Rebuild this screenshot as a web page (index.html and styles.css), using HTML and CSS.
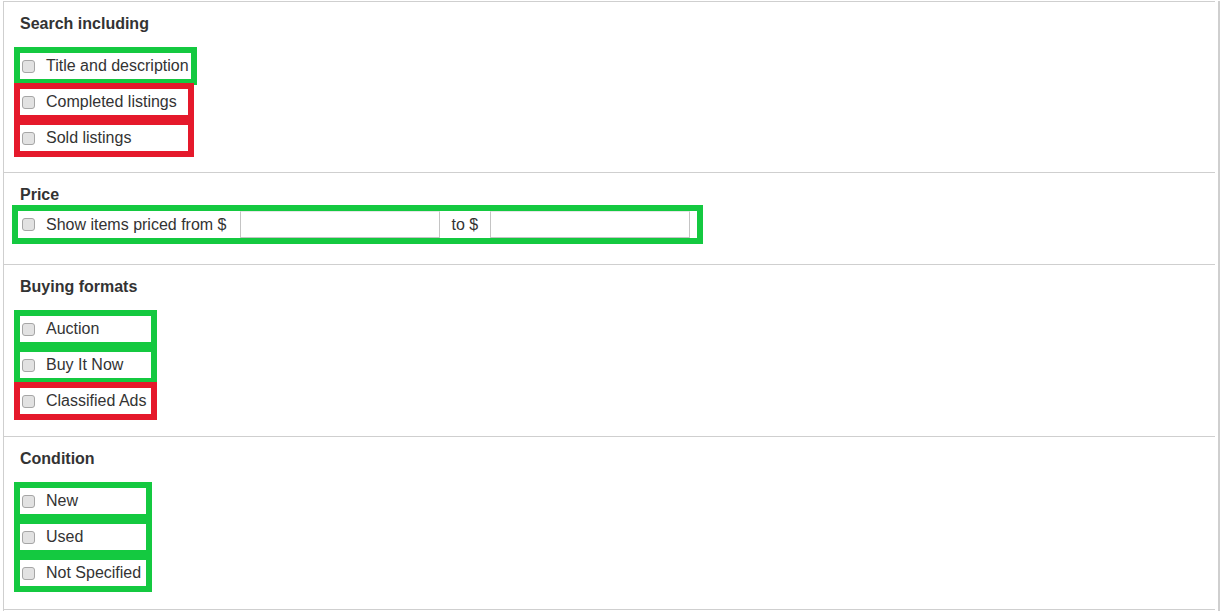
FILE: index.html
```html
<!DOCTYPE html>
<html lang="en">
  <head>
    <meta charset="UTF-8" />
    <meta name="viewport" content="width=device-width, initial-scale=1.0" />
    <title>Search filters</title>
    <link rel="stylesheet" href="styles.css">
  </head>
  <body>
    <div class="frame">
      <div class="panel">
        <section class="filter filter-search">
          <h3 class="filter-title">Search including</h3>
          <div class="mark mark-green">
            <label class="option"><input type="checkbox" /><span>Title and description</span></label>
          </div>
          <div class="mark mark-red mark-next">
            <label class="option option-wide"><input type="checkbox" /><span>Completed listings</span></label>
            <label class="option option-wide"><input type="checkbox" /><span>Sold listings</span></label>
          </div>
        </section>

        <section class="filter filter-price">
          <h3 class="filter-title">Price</h3>
          <div class="mark mark-green mark-price">
            <div class="price-row">
              <label class="option"><input type="checkbox" /><span>Show items priced from $</span></label>
              <input type="text" class="price-input" />
              <span class="price-sep">to $</span>
              <input type="text" class="price-input" />
            </div>
          </div>
        </section>

        <section class="filter filter-formats">
          <h3 class="filter-title">Buying formats</h3>
          <div class="mark mark-green mark-formats">
            <label class="option"><input type="checkbox" /><span>Auction</span></label>
            <label class="option"><input type="checkbox" /><span>Buy It Now</span></label>
          </div>
          <div class="mark mark-red mark-formats mark-next">
            <label class="option"><input type="checkbox" /><span>Classified Ads</span></label>
          </div>
        </section>

        <section class="filter filter-condition">
          <h3 class="filter-title">Condition</h3>
          <div class="mark mark-green mark-condition">
            <label class="option"><input type="checkbox" /><span>New</span></label>
            <label class="option"><input type="checkbox" /><span>Used</span></label>
            <label class="option"><input type="checkbox" /><span>Not Specified</span></label>
          </div>
        </section>
      </div>
    </div>
  </body>
</html>
```

FILE: styles.css
```css
:root {
  --line: #cfcfcf;
  --text: #333333;
  --mark-green: #14c940;
  --mark-red: #e5192b;
  --box-border: #a6a6a6;
  --box-fill: #e2e2e2;
}

body {
  margin: 0;
  font-family: 'Liberation Sans', Arial, sans-serif;
  font-size: 16px;
  color: var(--text);
  background: #fff;
}

.frame {
  margin-left: 3px;
  width: 1214px;
  min-height: 100vh;
  border-left: 1px solid var(--line);
  border-right: 2px solid var(--line);
}

.panel {
  margin-top: 1px;
  margin-right: 3px;
  border-top: 1px solid var(--line);
}

.filter {
  padding: 13px 0 16px 16px;
  border-bottom: 1px solid var(--line);
}

.filter-title {
  margin: 0 0 14px;
  font-size: 16px;
  line-height: 18px;
  font-weight: bold;
}

.filter-search {
  padding-top: 13px;
  padding-bottom: 15px;
}

.filter-price {
  padding-bottom: 20px;
}

.filter-price .filter-title {
  margin-bottom: 1px;
}

.filter-condition {
  padding-bottom: 17px;
}

/* coloured frames drawn round the options */
.mark {
  position: relative;
  display: flex;
  flex-direction: column;
  gap: 10px;
  width: fit-content;
  margin-left: -6px;
  border: 6px solid var(--mark-green);
}

.mark-green {
  border-color: var(--mark-green);
  background: var(--mark-green);
}

.mark-red {
  border-color: var(--mark-red);
  background: var(--mark-red);
}

.mark-next {
  margin-top: -2px;
}

.mark-formats {
  width: 131px;
}

.mark-condition {
  width: 126px;
}

.mark-price {
  margin-left: -8px;
  padding-left: 2px;
  background: #fff;
}

.option {
  display: flex;
  align-items: center;
  height: 26px;
  padding-right: 2px;
  background: #fff;
  white-space: nowrap;
  cursor: pointer;
}

.option-wide {
  padding-right: 11px;
}

.option input {
  appearance: none;
  -webkit-appearance: none;
  width: 13px;
  height: 13px;
  margin: 0 11px 0 2px;
  border: 1px solid var(--box-border);
  border-radius: 3px;
  background: var(--box-fill);
  flex-shrink: 0;
}

.price-row {
  display: flex;
  align-items: stretch;
  height: 27px;
  padding-right: 7px;
  background: #fff;
}

.price-row .option {
  height: auto;
  padding-right: 13px;
}

.price-input {
  width: 200px;
  height: 27px;
  box-sizing: border-box;
  margin: 0;
  padding: 0 4px;
  border: 1px solid #c4c4c4;
  border-top-color: #e6e6e6;
  font-family: inherit;
  font-size: 16px;
}

.price-sep {
  display: flex;
  align-items: center;
  padding: 0 12px;
}
```
